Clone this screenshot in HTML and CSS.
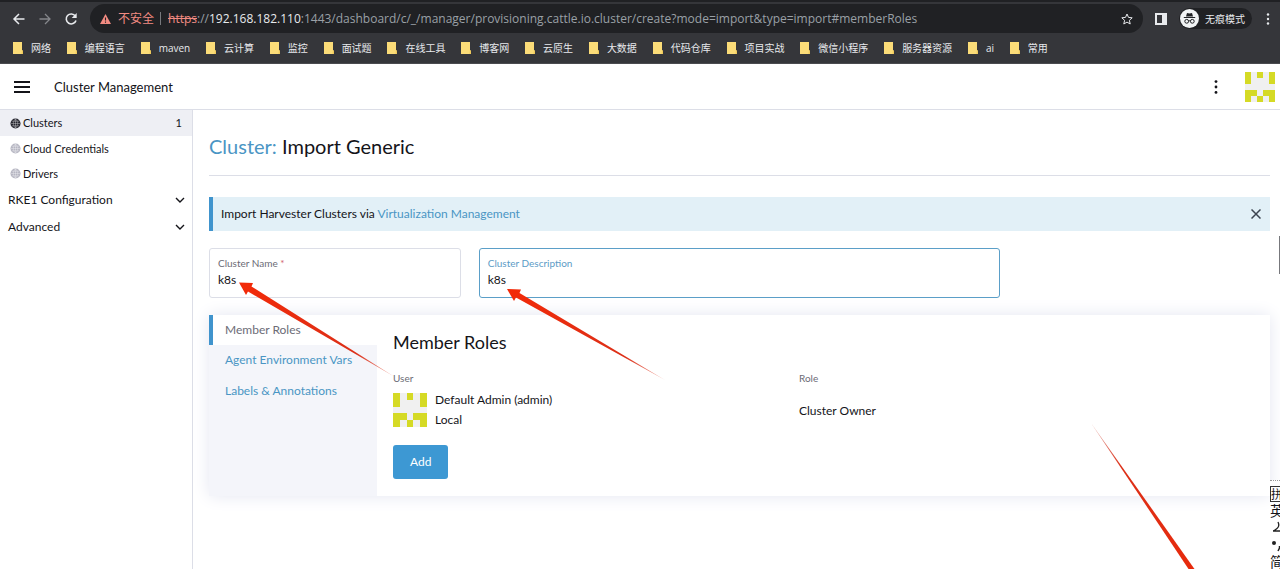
FILE: index.html
```html
<!DOCTYPE html>
<html lang="zh-CN">
<head>
<meta charset="utf-8">
<title>Cluster Management</title>
<link rel="stylesheet" href="styles.css">
</head>
<body>
<svg class="defs" aria-hidden="true">
  <symbol id="avatar" viewBox="0 0 5 5" shape-rendering="crispEdges">
    <path fill="#f0f0f0" d="M0 0h5v5H0z"/>
    <path fill="#d5da25" d="M0 0h1v2H0zM2 0h1v1H2zM4 0h1v2H4zM0 3h2v1H1v1H0zM3 3h2v2H4V4H3zM2 4h1v1H2z"/>
  </symbol>
  <symbol id="folder" viewBox="0 0 10 12">
    <path fill="#fbdc78" d="M0 0h9v8l1 1v3H0z"/><path fill="#efc95a" d="M9 8l1 1v3H8.500z"/>
  </symbol>
  <symbol id="globe" viewBox="0 0 12 12">
    <circle cx="6" cy="6" r="5.500" fill="currentColor"/>
    <path d="M1 6h10M6 1v10M2 3.500h8M2 8.500h8M6 1C2.800 4 2.800 8 6 11M6 1c3.200 3 3.200 7 0 10" fill="none" stroke="#fff" stroke-opacity=".6" stroke-width=".6"/>
  </symbol>
  <symbol id="chevron" viewBox="0 0 10 6"><path d="M1 1l4 4 4-4" fill="none" stroke="currentColor" stroke-width="1.400"/></symbol>
</svg>

<div class="browser">
  <div class="toolbar">
    <button class="tool" aria-label="后退"><svg width="14" height="14" viewBox="0 0 14 14"><path d="M12.500 7H2M7 2L2 7l5 5" fill="none" stroke="#e8eaed" stroke-width="1.500"/></svg></button>
    <button class="tool" aria-label="前进"><svg width="14" height="14" viewBox="0 0 14 14"><path d="M1.500 7H12M7 2l5 5-5 5" fill="none" stroke="#85878b" stroke-width="1.300"/></svg></button>
    <button class="tool" aria-label="重新加载"><svg width="14" height="14" viewBox="0 0 14 14"><path d="M11.300 4A5 5 0 1 0 12 8.500" fill="none" stroke="#e8eaed" stroke-width="1.600"/><path d="M12.700 1v5H7.700z" fill="#e8eaed"/></svg></button>
    <div class="omnibox">
      <svg width="11" height="10" viewBox="0 0 11 10"><path d="M5.500 0L11 10H0z" fill="#f28b82"/><path d="M5.500 3.500v3M5.500 7.500v1.200" stroke="#202124" stroke-width="1.100"/></svg>
      <span class="unsafe">不安全</span>
      <span class="divider"></span>
      <span class="url"><s>https</s>://<b>192.168.182.110</b>:1443/dashboard/c/_/manager/provisioning.cattle.io.cluster/create?mode=import&amp;type=import#memberRoles</span>
      <button class="tool star" aria-label="收藏"><svg width="12" height="12" viewBox="0 0 12 12"><path d="M6 1l1.500 3.400 3.700.4-2.800 2.500.8 3.700L6 9.100 2.800 11l.8-3.700L.8 4.800l3.700-.4z" fill="none" stroke="#e8eaed"/></svg></button>
    </div>
    <button class="tool" aria-label="侧边栏"><svg width="12" height="12" viewBox="0 0 12 12"><path d="M0 0h12v12H0zM2 2v8h5V2z" fill="#e8eaed" fill-rule="evenodd"/></svg></button>
    <button class="incognito">
      <svg width="19" height="19" viewBox="0 0 19 19"><circle cx="9.500" cy="9.500" r="9.500" fill="#f1f3f4"/><path d="M7 4l2.500.6L12 4l1 3.500H6zM3.800 8h11.400v1H3.800z" fill="#202124"/><g fill="none" stroke="#202124"><circle cx="6.700" cy="12.300" r="1.900"/><circle cx="12.300" cy="12.300" r="1.900"/><path d="M8.600 12q.9-.6 1.800 0"/></g></svg>
      <span>无痕模式</span>
    </button>
    <button class="tool" aria-label="菜单"><svg width="4" height="12" viewBox="0 0 4 12" fill="#e8eaed"><circle cx="2" cy="1.500" r="1.200"/><circle cx="2" cy="6" r="1.200"/><circle cx="2" cy="10.500" r="1.200"/></svg></button>
  </div>
  <nav class="bookmarks">
    <a href="#"><svg><use href="#folder"/></svg>网络</a>
    <a href="#"><svg><use href="#folder"/></svg>编程语言</a>
    <a href="#"><svg><use href="#folder"/></svg>maven</a>
    <a href="#"><svg><use href="#folder"/></svg>云计算</a>
    <a href="#"><svg><use href="#folder"/></svg>监控</a>
    <a href="#"><svg><use href="#folder"/></svg>面试题</a>
    <a href="#"><svg><use href="#folder"/></svg>在线工具</a>
    <a href="#"><svg><use href="#folder"/></svg>博客网</a>
    <a href="#"><svg><use href="#folder"/></svg>云原生</a>
    <a href="#"><svg><use href="#folder"/></svg>大数据</a>
    <a href="#"><svg><use href="#folder"/></svg>代码仓库</a>
    <a href="#"><svg><use href="#folder"/></svg>项目实战</a>
    <a href="#"><svg><use href="#folder"/></svg>微信小程序</a>
    <a href="#"><svg><use href="#folder"/></svg>服务器资源</a>
    <a href="#"><svg><use href="#folder"/></svg>ai</a>
    <a href="#"><svg><use href="#folder"/></svg>常用</a>
  </nav>
</div>

<header class="app-header">
  <button class="plain" aria-label="Menu"><svg width="16" height="12" viewBox="0 0 16 12"><path d="M0 1h16M0 6h16M0 11h16" stroke="#141419" stroke-width="1.800"/></svg></button>
  <span class="product">Cluster Management</span>
  <button class="plain" aria-label="More"><svg width="4" height="14" viewBox="0 0 4 14" fill="#141419"><circle cx="2" cy="1.600" r="1.400"/><circle cx="2" cy="7" r="1.400"/><circle cx="2" cy="12.400" r="1.400"/></svg></button>
  <button class="plain" aria-label="User"><svg width="30" height="30"><use href="#avatar"/></svg></button>
</header>

<div class="app">
  <nav class="side">
    <a class="item active" href="#"><svg><use href="#globe"/></svg><span>Clusters</span><span class="count">1</span></a>
    <a class="item" href="#"><svg><use href="#globe"/></svg><span>Cloud Credentials</span></a>
    <a class="item" href="#"><svg><use href="#globe"/></svg><span>Drivers</span></a>
    <button class="group">RKE1 Configuration<svg><use href="#chevron"/></svg></button>
    <button class="group">Advanced<svg><use href="#chevron"/></svg></button>
  </nav>

  <main class="main">
    <h1><a href="#">Cluster:</a> Import Generic</h1>
    <div class="banner">
      <p>Import Harvester Clusters via <a href="#">Virtualization Management</a></p>
      <button class="plain" aria-label="Close"><svg width="10" height="10" viewBox="0 0 10 10"><path d="M.5.5l9 9M9.500.5l-9 9" stroke="#3c4450" stroke-width="1.500"/></svg></button>
    </div>
    <form class="fields">
      <div class="field name">
        <label for="name">Cluster Name <span class="req">*</span></label>
        <input id="name" type="text" value="k8s">
      </div>
      <div class="field desc">
        <label for="desc">Cluster Description</label>
        <input id="desc" type="text" value="k8s">
      </div>
    </form>
    <section class="tabs">
      <div class="tab-list">
        <a class="tab current" href="#">Member Roles</a>
        <a class="tab" href="#">Agent Environment Vars</a>
        <a class="tab" href="#">Labels &amp; Annotations</a>
      </div>
      <div class="panel">
        <h2>Member Roles</h2>
        <div class="members">
          <div class="head">User</div>
          <div class="head">Role</div>
          <div class="user">
            <svg width="34" height="34"><use href="#avatar"/></svg>
            <div>Default Admin (admin)<br>Local</div>
          </div>
          <div>Cluster Owner</div>
        </div>
        <button class="add">Add</button>
      </div>
    </section>
  </main>
</div>

<svg class="arrows" width="1280" height="569" viewBox="0 0 1280 569" aria-hidden="true">
  <defs>
    <linearGradient id="fade"><stop offset="0" stop-color="#f32a08"/><stop offset=".75" stop-color="#dc3018"/><stop offset="1" stop-color="#dc3018" stop-opacity=".4"/></linearGradient>
    <linearGradient id="fade-down" x1="0" y1="0" x2="0" y2="1"><stop offset="0" stop-color="#c83020" stop-opacity=".4"/><stop offset=".3" stop-color="#dc3018"/><stop offset="1" stop-color="#e72a0c"/></linearGradient>
  </defs>
  <path fill="url(#fade)" d="M239 282.500l14 .5-1.500 3.500L394 376.500 248 291.500l-2 3.500z"/>
  <path fill="url(#fade)" d="M507 289l14 .5-1.500 3.500L665 380 516 297.500l-2 3.500z"/>
  <path fill="url(#fade-down)" d="M1091 423L1194.500 569h-6z"/>
</svg>
<div class="scroll-thumb"></div>
<div class="ime">
  <span class="boxed">拼</span>
  <span>英</span>
  <svg width="16" height="17" viewBox="0 0 16 17"><path d="M8 3q2 4-1 6.500T3 12h10" fill="none" stroke="#222" stroke-width="1.300"/></svg>
  <svg width="16" height="17" viewBox="0 0 16 17"><circle cx="4" cy="7" r="2" fill="#222"/><path d="M9.500 10v2l-1.500 3" fill="none" stroke="#222" stroke-width="1.500"/></svg>
  <span>简</span>
</div>
</body>
</html>
```
FILE: styles.css
```css
* { box-sizing: border-box; }
body {
  margin: 0;
  min-height: 100vh;
  display: flex;
  flex-direction: column;
  position: relative;
  overflow: hidden;
  background: #fff;
  color: #141419;
  font: 12px/20px Lato, "Noto Sans CJK SC", sans-serif;
}
a { color: #4a95c4; text-decoration: none; }
button { font: inherit; color: inherit; border: 0; padding: 0; background: none; }
svg { display: block; flex: none; }
.defs { position: absolute; width: 0; height: 0; }

.browser {
  background: #35363a;
  border-top: 2px solid #202124;
  border-bottom: 1px solid #4a4b4f;
  color: #e8eaed;
  font-family: "Open Sans", "Noto Sans CJK SC", sans-serif;
}
.toolbar { display: flex; align-items: center; gap: 12px; padding: 2px 10px 3px 12px; }
.omnibox {
  flex: 1;
  display: flex;
  align-items: center;
  height: 29px;
  padding: 0 10px;
  border-radius: 15px;
  background: #202124;
}
.unsafe { margin-left: 7px; color: #f28b82; font-size: 12px; }
.divider { width: 1px; height: 13px; margin: 0 7px 0 6px; background: #77797d; }
.url { flex: 1; color: #9aa0a6; font-size: 12px; white-space: nowrap; }
.url s { color: #f28b82; }
.url b { color: #e8eaed; font-weight: 400; }
.incognito {
  display: flex;
  align-items: center;
  gap: 6px;
  height: 21px;
  margin-right: 2px;
  padding: 0 7px 0 1px;
  border-radius: 11px;
  background: #202124;
  font-size: 10px;
}
.bookmarks {
  display: flex;
  justify-content: space-between;
  padding: 2px 232px 5px 13px;
}
.bookmarks a { display: flex; align-items: center; gap: 8px; color: #e8eaed; font-size: 10px; line-height: 20px; white-space: nowrap; }
.bookmarks svg { width: 10px; height: 12px; }

.app-header {
  display: flex;
  align-items: center;
  height: 46px;
  padding: 0 5px 0 14px;
  border-bottom: 1px solid #dcdee7;
}
.product { flex: 1; margin-left: 24px; font-size: 13px; }
.app-header .plain:last-child { margin-left: 27px; }

.app { flex: 1; display: flex; }
.side { width: 193px; border-right: 1px solid #dcdee7; }
.item { display: flex; align-items: center; gap: 2px; height: 26px; padding: 0 10px; color: #141419; font-size: 11px; }
.item + .item { height: 25px; }
.item svg { width: 11px; height: 11px; color: #b6b6c2; }
.item.active { background: #eeeff4; }
.item.active svg { color: #26262f; }
.count { margin-left: auto; }
.group { display: flex; align-items: center; justify-content: space-between; width: 100%; height: 27px; padding: 0 7px 0 8px; }
.group svg { width: 10px; height: 6px; }

.main { flex: 1; padding: 21px 10px 0 16px; }
h1, h2, p { margin: 0; font-weight: 400; }
h1 { padding-bottom: 13px; border-bottom: 1px solid #dcdee7; font-size: 20px; line-height: 31px; }
.banner {
  display: flex;
  align-items: center;
  justify-content: space-between;
  height: 34px;
  margin: 21px 0 17px;
  padding: 0 9px 0 8px;
  border-left: 4px solid #4094cd;
  background: #e2f0f7;
}
.fields { display: grid; grid-template-columns: repeat(12, 1fr); gap: 18px; margin-bottom: 17px; }
.field { padding: 6px 8px 8px; border: 1px solid #dcdee7; border-radius: 3px; }
.field label { display: block; color: #6c6c76; font-size: 10px; line-height: 16px; }
.field input { display: block; width: 100%; height: 18px; padding: 0; border: 0; outline: 0; background: none; color: #141419; font: inherit; }
.field .req { color: #d0606a; }
.name { grid-column: span 3; }
.desc { grid-column: span 6; border-color: #5b9fc8; }
.field.desc label { color: #5c9cc6; }

.tabs { display: flex; min-height: 181px; box-shadow: 0 0 16px #e4e6f1; }
.tab-list { width: 168px; background: #f4f5fa; }
.tab { display: block; padding: 4px 16px 6px; line-height: 21px; }
.tab.current { padding: 4px 12px 5px; border-left: 4px solid #4094cd; background: #fff; color: #6c6c76; }
.panel { flex: 1; padding: 16px; background: #fff; }
h2 { font-size: 18px; line-height: 22px; }
.members { display: grid; grid-template-columns: 406fr 455fr; align-items: center; margin-top: 15px; }
.head { color: #6c6c76; font-size: 10px; line-height: 20px; }
.user { display: flex; align-items: center; gap: 8px; padding: 2px 0 3px; }
.add { height: 34px; margin-top: 12px; padding: 0 17px; border-radius: 3px; background: #3d98d3; color: #fff; }

.arrows { position: absolute; left: 0; top: 0; pointer-events: none; }
.scroll-thumb { position: absolute; right: 0; top: 236px; width: 1px; height: 38px; background: #77787c; }
.ime {
  position: absolute;
  left: calc(100% - 10px);
  top: 480px;
  display: flex;
  flex-direction: column;
  width: 30px;
  padding-top: 5px;
  border-top: 1px dotted #999;
  background: #fff;
  font: 14px/17px "Noto Sans CJK SC", sans-serif;
}
.ime .boxed { width: 16px; border: 1px solid #333; font-size: 12px; line-height: 14px; }
```
